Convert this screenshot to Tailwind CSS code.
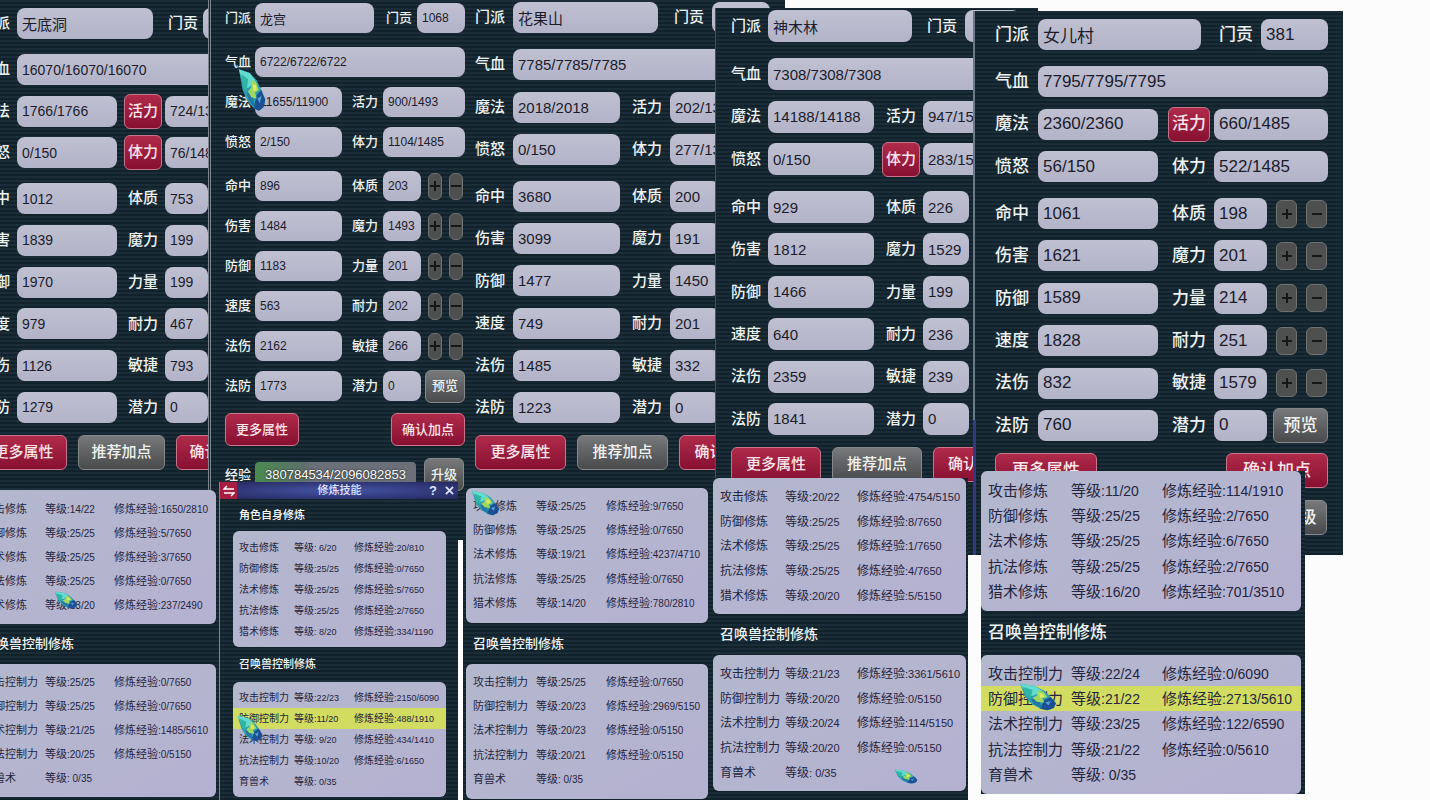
<!DOCTYPE html>
<html lang="zh-CN">
<head>
  <meta charset="UTF-8" />
  <title>角色属性</title>
  <script src="https://cdn.jsdelivr.net/npm/@tailwindcss/browser@4"></script>
</head>
<body class="bg-[#fcfcfd] font-['Liberation_Sans','Noto_Sans_CJK_SC',sans-serif]">
  <main id="desktop" class="relative h-screen min-h-[800px] overflow-hidden"></main>

  <script>
    // Character windows, back to front
    const roles = [
      {
        box: "left-[-28px] top-0 w-[236px] h-[500px] pl-2 pt-2", gap: "gap-[15px]",
        g1: "h-[114px]", g2: "h-[240px]", row: "h-[31px]", lab: "w-[37px] text-[15px]", num: "text-[14px]", han: "text-[15px]",
        school: "w-[136px]", tribLab: "ml-[15px] w-[35px]", left: "w-[100px]", rightLab: "ml-[11px] w-[37px]", rightText: "text-[15px]",
        right: "w-[120px]", small: "w-[43px]", trib: "w-[60px]", hp: "w-[240px]",
        btn: "w-[87px] h-[35px] text-[15px]", btnGap: "gap-[11px]",
        name: "无底洞", tribute: "", hpVal: "16070/16070/16070",
        top: [["魔法", "1766/1766", "活力", "724/1385", 1], ["愤怒", "0/150", "体力", "76/1485", 1]],
        stats: [["命中", 1012, "体质", 753], ["伤害", 1839, "魔力", 199], ["防御", 1970, "力量", 199], ["速度", 979, "耐力", 467], ["法伤", 1126, "敏捷", 793], ["法防", 1279, "潜力", 0]],
        buttons: 3
      },
      {
        box: "left-[457px] top-0 w-[328px] h-[540px] pl-[18px] pt-[2px]", gap: "gap-4",
        g1: "h-[116px]", g2: "h-[242px]", row: "h-[31px]", lab: "w-[38px] text-[15px]", num: "text-[15px]", han: "text-[15px]",
        school: "w-[145px]", tribLab: "ml-4 w-[38px]", left: "w-[107px]", rightLab: "ml-2 w-[42px] pl-1", rightText: "text-[15px]",
        right: "w-[100px]", small: "w-[50px]", trib: "w-[58px]", hp: "w-[257px]",
        btn: "w-[91px] h-[35px] text-[15px]", btnGap: "gap-[11px]",
        name: "花果山", tribute: "", hpVal: "7785/7785/7785",
        top: [["魔法", "2018/2018", "活力", "202/1385"], ["愤怒", "0/150", "体力", "277/1385"]],
        stats: [["命中", 3680, "体质", 200], ["伤害", 3099, "魔力", 191], ["防御", 1477, "力量", 1450], ["速度", 749, "耐力", 201], ["法伤", 1485, "敏捷", 332], ["法防", 1223, "潜力", 0]],
        buttons: 3
      },
      {
        box: "left-[208px] top-0 w-[258px] h-[500px] pl-[14px] pt-[3px] border-l-3 border-double border-[#7d8790]", gap: "gap-[14px]",
        g1: "h-[110px]", g2: "h-[230px]", row: "h-[30px]", lab: "w-[30px] text-[13px]", num: "text-[12px]", han: "text-[13px]",
        school: "w-[119px]", tribLab: "ml-3 w-[31px]", left: "w-[87px]", rightLab: "ml-[10px] w-[31px]", rightText: "text-[13px]",
        right: "w-[82px]", small: "w-[38px]", trib: "w-[48px]", hp: "w-[210px]", step: "ml-[7px] w-[14px] h-[27px]", view: "ml-1 w-[40px] h-[33px] text-[13px]",
        btn: "w-[74px] h-[33px] text-[13px]", btnGap: "justify-between pr-px",
        name: "龙宫", tribute: "1068", hpVal: "6722/6722/6722",
        top: [["魔法", "11655/11900", "活力", "900/1493"], ["愤怒", "2/150", "体力", "1104/1485"]],
        stats: [["命中", 896, "体质", 203], ["伤害", 1484, "魔力", 1493], ["防御", 1183, "力量", 201], ["速度", 563, "耐力", 202], ["法伤", 2162, "敏捷", 266], ["法防", 1773, "潜力", 0]],
        buttons: 2, exp: "380784534/2096082853", expBar: "w-[161px]"
      },
      {
        box: "left-[715px] top-[8px] w-[323px] h-[547px] pl-[15px] pt-[2px] border-l border-[#44525c]", gap: "gap-4",
        g1: "h-[117px]", g2: "h-[244px]", row: "h-[32px]", lab: "w-[37px] text-[15px]", num: "text-[15px]", han: "text-[15px]",
        school: "w-[144px]", tribLab: "ml-[15px] w-[38px]", left: "w-[106px]", rightLab: "ml-3 w-[37px]", rightText: "text-[15px]",
        right: "w-[100px]", small: "w-[46px]", trib: "w-[55px]", hp: "w-[255px]",
        btn: "w-[90px] h-[35px] text-[15px]", btnGap: "gap-[11px]",
        name: "神木林", tribute: "", hpVal: "7308/7308/7308",
        top: [["魔法", "14188/14188", "活力", "947/1500"], ["愤怒", "0/150", "体力", "283/1500", 1]],
        stats: [["命中", 929, "体质", 226], ["伤害", 1812, "魔力", 1529], ["防御", 1466, "力量", 199], ["速度", 640, "耐力", 236], ["法伤", 2359, "敏捷", 239], ["法防", 1841, "潜力", 0]],
        buttons: 3
      },
      {
        box: "left-[973px] top-[11px] w-[370px] h-[544px] pl-5 pt-2 border-l-2 border-[#6b7a86]", gap: "gap-4",
        g1: "h-[116px]", g2: "h-[243px]", row: "h-[31px]", lab: "w-[43px] text-[17px]", num: "text-[17px]", han: "text-[17px]",
        school: "w-[163px]", tribLab: "ml-[18px] w-[42px]", left: "w-[120px]", rightLab: "ml-[14px] w-[42px]", rightText: "text-[17px]",
        right: "w-[114px]", small: "w-[53px]", trib: "w-[67px]", hp: "w-[290px]", step: "ml-[9px] w-[21px] h-[28px]", view: "ml-[6px] w-[55px] h-[35px] text-[17px]",
        btn: "w-[102px] h-[35px] text-[17px]", btnGap: "justify-between pr-[15px]",
        name: "女儿村", tribute: "381", hpVal: "7795/7795/7795",
        top: [["魔法", "2360/2360", "活力", "660/1485", 1], ["愤怒", "56/150", "体力", "522/1485"]],
        stats: [["命中", 1061, "体质", 198], ["伤害", 1621, "魔力", 201], ["防御", 1589, "力量", 214], ["速度", 1828, "耐力", 251], ["法伤", 832, "敏捷", 1579], ["法防", 760, "潜力", 0]],
        buttons: 2, exp: "", expBar: "w-[228px]"
      }
    ];

    // Training windows; rows are [level, exp, selected]
    const self = ["攻击修炼", "防御修炼", "法术修炼", "抗法修炼", "猎术修炼"];
    const pet = ["攻击控制力", "防御控制力", "法术控制力", "抗法控制力", "育兽术"];
    const trainings = [
      {
        box: "left-[-23px] top-[490px] w-[242px] h-[310px]", card: "w-[239px]", c1: "h-[134px] pt-[7px]", c2: "h-[133px] pt-[6px]",
        table: "h-[121px] text-[11px]", num: "text-[10px]", a: "w-[68px] pl-[6px]", b: "w-[69px]", head: "h-[40px] pl-[6px] text-[13px]",
        one: [["14/22", "1650/2810"], ["25/25", "5/7650"], ["25/25", "3/7650"], ["25/25", "0/7650"], ["13/20", "237/2490"]],
        two: [["25/25", "0/7650"], ["25/25", "0/7650"], ["21/25", "1485/5610"], ["20/25", "0/5150"], [" 0/35", ""]]
      },
      {
        box: "left-[463px] top-[488px] w-[250px] h-[312px] pl-[3px]", card: "w-[242px]", c1: "h-[135px] pt-[6px]", c2: "h-[135px] pt-[6px]",
        table: "h-[122px] text-[11px]", num: "text-[10px]", a: "w-[70px] pl-[7px]", b: "w-[70px]", head: "h-[41px] pl-[7px] text-[13px]",
        one: [["25/25", "9/7650"], ["25/25", "0/7650"], ["19/21", "4237/4710"], ["25/25", "0/7650"], ["14/20", "780/2810"]],
        two: [["25/25", "0/7650"], ["20/23", "2969/5150"], ["20/23", "0/5150"], ["20/21", "0/5150"], [" 0/35", ""]]
      },
      {
        box: "left-[219px] top-[482px] w-[239px] h-[318px] border-l border-[#7d8790]", card: "ml-[13px] w-[213px]", c1: "h-[116px] pt-[6px]", c2: "h-[115px] pt-[5px]",
        table: "h-[105px] text-[10px]", num: "text-[9px]", a: "w-[61px] pl-[6px]", b: "w-[60px]", head: "h-[35px] pl-[19px] text-[11px] font-medium",
        title: "修炼技能",
        one: [[" 6/20", "20/810"], ["25/25", "0/7650"], ["25/25", "5/7650"], ["25/25", "2/7650"], [" 8/20", "334/1190"]],
        two: [["22/23", "2150/6090"], ["11/20", "488/1910", 1], [" 9/20", "434/1410"], ["10/20", "6/1650"], [" 0/35", ""]]
      },
      {
        box: "left-[710px] top-[478px] w-[258px] h-[322px] pl-[3px]", card: "w-[253px]", c1: "h-[136px] pt-[7px]", c2: "h-[136px] pt-[7px]",
        table: "h-[123px] text-[12px]", num: "text-[11px]", a: "w-[72px] pl-[7px]", b: "w-[72px]", head: "h-[41px] pl-[7px] text-[14px]",
        one: [["20/22", "4754/5150"], ["25/25", "8/7650"], ["25/25", "1/7650"], ["25/25", "4/7650"], ["20/20", "5/5150"]],
        two: [["21/23", "3361/5610"], ["20/20", "0/5150"], ["20/24", "114/5150"], ["20/20", "0/5150"], [" 0/35", ""]]
      },
      {
        box: "left-[981px] top-[471px] w-[324px] h-[323px]", card: "w-[320px]", c1: "h-[140px] pt-[7px]", c2: "h-[139px] pt-[6px]",
        table: "h-[126px] text-[15px]", num: "text-[14px]", a: "w-[90px] pl-[7px]", b: "w-[91px]", head: "h-[44px] pl-[7px] text-[17px]",
        one: [["11/20", "114/1910"], ["25/25", "2/7650"], ["25/25", "6/7650"], ["25/25", "2/7650"], ["16/20", "701/3510"]],
        two: [["22/24", "0/6090"], ["21/22", "2713/5610", 1], ["23/25", "122/6590"], ["21/22", "0/5610"], [" 0/35", ""]]
      }
    ];

    const scan = "bg-[repeating-linear-gradient(0deg,#12222b_0px,#12222b_2px,#1b2d39_2px,#1b2d39_4px)]";
    const red = "bg-linear-to-b from-[#b02a4b] to-[#870f31] border border-[#c8748a] text-[#fbe6ea] font-medium";
    const gray = "bg-linear-to-b from-[#77797a] to-[#484a4b] border border-[#85898a] text-[#f0f2f0] font-medium";
    let uid = 0;

    function field(r, width, value, id, name) {
      const han = /[\u4e00-\u9fff]/.test(value);
      return `<input id="${id}" aria-label="${name}" value="${value}" readonly
        class="h-full shrink-0 rounded-lg bg-linear-to-b from-[#bfc0d1] to-[#b3b3c9] pl-[5px] text-[#1c1c2b] outline-none ${width} ${han ? r.han : r.num}" />`;
    }

    function label(cls, text, id) {
      return `<label for="${id}" class="shrink-0 font-medium whitespace-nowrap text-[#eef3f1] ${cls}">${text}</label>`;
    }

    function pair(r, labCls, width, name, value, isButton) {
      const id = "f" + uid++;
      const lab = isButton
        ? `<div class="shrink-0 ${labCls}"><button class="-ml-1 h-[35px] rounded-md px-[3px] whitespace-nowrap ${red}">${name}</button></div>`
        : label(labCls, name, id);
      return lab + field(r, width, value, id, name);
    }

    function line(r, html) {
      return `<div class="flex items-center ${r.row}">${html}</div>`;
    }

    function steps(r, last) {
      if (!r.step) return "";
      if (last) return `<button class="shrink-0 rounded-md ${gray} ${r.view}">预览</button>`;
      return ["M5 0v10M0 5h10", "M0 5h10"].map((d, i) => `
        <button aria-label="${i ? "减少" : "增加"}" class="flex shrink-0 items-center justify-center rounded-md border border-[#6f7271] bg-[#4e504f] ${r.step}">
          <svg class="size-[10px]" viewBox="0 0 10 10" stroke="#151719" stroke-width="2"><path d="${d}" /></svg>
        </button>`).join("");
    }

    function roleWindow(r) {
      const names = r.buttons === 3 ? ["更多属性", "推荐加点", "确认加点"] : ["更多属性", "确认加点"];
      const rightLab = `${r.rightLab} ${r.rightText}`;
      return `<section class="absolute overflow-hidden ${scan} ${r.box}">
        <div class="flex flex-col ${r.gap}">
          ${line(r, pair(r, r.lab, r.school, "门派", r.name) + pair(r, `${r.tribLab} ${r.rightText}`, r.trib, "门贡", r.tribute))}
          <div class="flex flex-col justify-between ${r.g1}">
            ${line(r, pair(r, r.lab, r.hp, "气血", r.hpVal))}
            ${r.top.map(t => line(r, pair(r, r.lab, r.left, t[0], t[1]) + pair(r, rightLab, r.right, t[2], t[3], t[4]))).join("")}
          </div>
          <div class="flex flex-col gap-3">
            <div class="flex flex-col justify-between ${r.g2}">
              ${r.stats.map((t, i) => line(r, pair(r, r.lab, r.left, t[0], t[1]) + pair(r, rightLab, r.small, t[2], t[3]) + steps(r, i === 5))).join("")}
            </div>
            <div class="flex ${r.btnGap}">
              ${names.map(n => `<button class="shrink-0 rounded-md whitespace-nowrap ${n === "推荐加点" ? gray : red} ${r.btn}">${n}</button>`).join("")}
            </div>
            ${r.expBar ? `<div class="flex items-center">
              <span class="shrink-0 font-medium text-[#eef3f1] ${r.lab}">${r.exp ? "经验" : ""}</span>
              <div class="flex h-[25px] shrink-0 items-center justify-center rounded-sm bg-linear-to-r from-[#4a8a4f] from-0% via-[#5c6f6a] via-30% to-[#6b7078] to-35% text-[13px] text-white text-shadow-[0_0_2px_#000] ${r.expBar}">${r.exp}</div>
              <button class="ml-2 shrink-0 rounded-md ${gray} ${r.view}">升级</button>
            </div>` : ""}
          </div>
        </div>
      </section>`;
    }

    function card(t, names, rows, size) {
      return `<div class="overflow-hidden rounded-md bg-linear-to-br from-[#b3b8cd] to-[#b5b1d1] ${t.card} ${size}">
        <table class="w-full table-fixed border-collapse text-left leading-none whitespace-pre text-[#25253f] ${t.table}">
          ${rows.map((x, i) => `<tr class="${x[2] ? "bg-[#d2dc60]" : ""}">
            <td class="${t.a}">${names[i]}</td><td class="${t.b}">等级<span class="${t.num}">:${x[0]}</span></td><td>${x[1] ? `修炼经验<span class="${t.num}">:${x[1]}</span>` : ""}</td>
          </tr>`).join("")}
        </table>
      </div>`;
    }

    function trainingWindow(t) {
      const bar = t.title ? `
        <header class="flex h-[17px] items-center bg-[#2b2d6c] bg-radial from-[#4554a5] to-[#25285e] text-[11px] text-[#dfe4ff]">
          <button aria-label="切换" class="flex h-full w-[17px] items-center justify-center bg-[#a81c40]">
            <svg class="size-[12px]" viewBox="0 0 12 12" fill="none" stroke="#fff" stroke-width="1.5"><path d="M4 1 1 4h10M8 11l3-3H1" /></svg>
          </button>
          <h1 class="flex-1 pl-4 text-center font-medium">${t.title}</h1>
          <button class="w-[14px] text-[13px] font-bold">?</button>
          <button aria-label="关闭" class="flex w-[18px] justify-center">
            <svg class="size-[9px]" viewBox="0 0 10 10" stroke="#dfe4ff" stroke-width="2"><path d="M1 1l8 8M9 1l-8 8" /></svg>
          </button>
        </header>
        <h2 class="flex h-[32px] items-center pl-[19px] text-[11px] font-medium text-white">角色自身修炼</h2>` : "";
      return `<section class="absolute overflow-hidden ${scan} ${t.box}">
        ${bar}
        ${card(t, self, t.one, t.c1)}
        <h2 class="flex items-center font-medium text-[#eef3f1] ${t.head}">召唤兽控制修炼</h2>
        ${card(t, pet, t.two, t.c2)}
      </section>`;
    }

    // Leaf-shaped mouse pointers
    const pointers = [
      "left-[238px] top-[68px] w-[28px] h-[44px]",
      "left-[54px] top-[591px] w-[24px] h-[18px]",
      "left-[237px] top-[715px] w-[26px] h-[27px]",
      "left-[471px] top-[490px] w-[29px] h-[26px]",
      "left-[894px] top-[769px] w-[24px] h-[15px]",
      "left-[1019px] top-[683px] w-[38px] h-[28px]"
    ];
    const pointer = cls => `<svg class="pointer-events-none absolute ${cls}" viewBox="0 0 36 36" preserveAspectRatio="none">
      <path d="M1 1 15 4l9 6 6 8 5 8-2 6-6 3-7-2-8-6-6-9Z" fill="#2e9fb0" />
      <path d="M1 1 15 4l7 6-8 6-5 1Z" fill="#63dccf" />
      <path d="M4 5 13 9l-2 10-4-2Z" fill="#2fb5a6" />
      <path d="m24 22 6-4 5 8-2 6-6 3-7-2Z" fill="#1d4f94" />
      <path d="m11 20 8 2 3 11-8-6Z" fill="#2377a4" />
      <path d="m17 10 6 1 4 7-5 2 2 5-7-1-4-5 4-3Z" fill="#9ed861" />
      <path d="m19 13 4 1 1 4-4 1Z" fill="#e0e866" />
      <path d="m25 25 5-2-2 6Z" fill="#4fa3d8" />
    </svg>`;

    // Blue edge of the window behind the last role
    const edge = `<div class="absolute top-[420px] left-[973px] h-[135px] w-[3px] bg-[#34397f]"></div>`;

    document.getElementById("desktop").innerHTML =
      roles.map(roleWindow).join("") + edge + trainings.map(trainingWindow).join("") + pointers.map(pointer).join("");
  </script>
</body>
</html>
